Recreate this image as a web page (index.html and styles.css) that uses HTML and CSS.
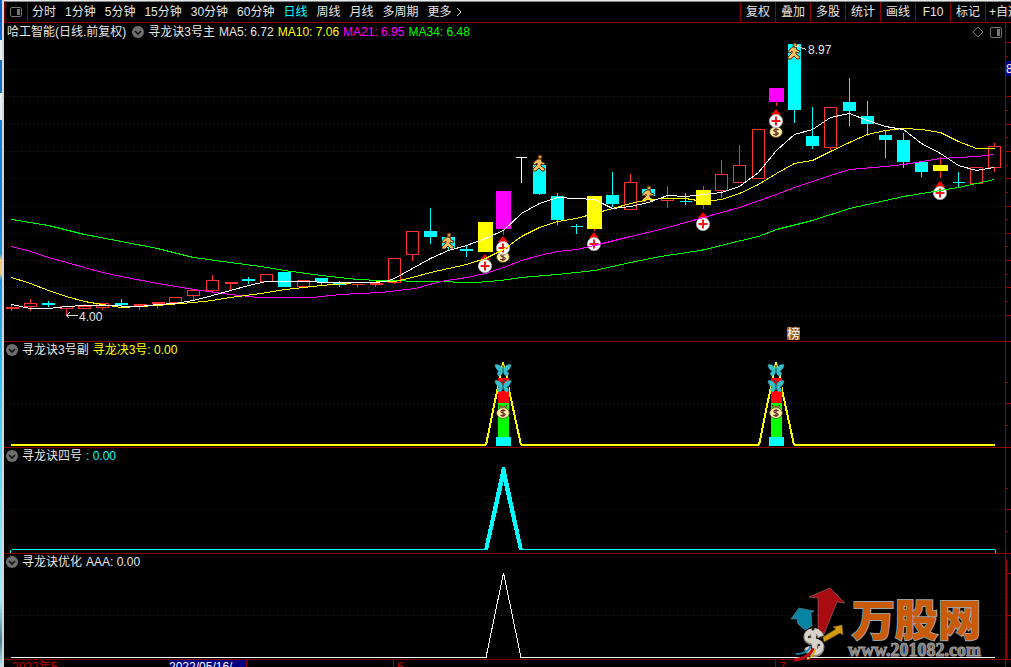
FILE: index.html
```html
<!DOCTYPE html>
<html lang="zh-CN">
<head>
<meta charset="utf-8">
<title>哈工智能 日线</title>
<link rel="stylesheet" href="styles.css">
</head>
<body>
<svg class="defs" aria-hidden="true">
  <defs>
    <symbol id="chev" viewBox="0 0 12 12"><circle cx="6" cy="6" r="6" fill="#6e6e6e"/><path d="M3 5l3 3 3-3" fill="none" stroke="#111" stroke-width="1.6"/></symbol>
    <g id="man">
      <path d="M-1-5L2-5 3-2 6-1 5 1 2 0 2 2 6 5 5 7 3 7 0 4-3 7-6 7-6 5-2 1-2-1-4 1-6 0-4-3z" fill="#f5bd60" stroke="#5a2c0c"/>
      <circle cx="1" cy="-7" r="2" fill="#e09a40" stroke="#5a2c0c"/>
    </g>
    <g id="cross">
      <path d="M-5-6L0-12 5-6z" fill="#f00"/>
      <circle r="6.6" fill="#fff" stroke="#aaa" stroke-width=".8"/>
      <path d="M-4.500 0H4.500M0-4.500V4.500" stroke="#f01818" stroke-width="2"/>
    </g>
    <g id="bag">
      <path d="M-4-8L0-6 4-8 2-4H-2z" fill="#d9a860" stroke="#5a2c10" stroke-width=".8"/>
      <ellipse rx="6.400" ry="5.400" fill="#fff0a0" stroke="#604020" stroke-width=".8"/>
      <path d="M2.500-2C1-3.500-2.500-3-2-1.200S2.500 0 2.200 1.600-1.500 3.200-2.600 2M0-4V4" fill="none" stroke="#6a3030" stroke-width="1.300"/>
    </g>
    <g id="fly">
      <path d="M0 0C-2-5-6-6-8-5-7-1-5 1-3 1-6 2-6 5-4 6-2 6-1 3 0 2 1 3 2 6 4 6 6 5 6 2 3 1 5 1 7-1 8-5 6-6 2-5 0 0z" fill="#35bfc9" stroke="#35bfc9" stroke-width=".7"/>
      <path d="M0-3V4M0-3L-2-6M0-3L2-6" stroke="#104c58" fill="none"/>
    </g>
    <g id="signal">
      <g shape-rendering="crispEdges">
        <path d="M-17 445L0 362 18 445" fill="none" stroke="#ff0" stroke-width="2"/>
        <path d="M-5 374H6V402H-5z" fill="#000"/>
        <path d="M-5 402h11v35h-11z" fill="#0f0"/>
        <path d="M-5 391h11v12h-11zM-5 378h11v7h-11z" fill="red"/>
        <path d="M-7 437h15v9h-15z" fill="#0ff"/>
        <path d="M-4 374h2v4h-2zM3 374h2v4h-2z" fill="#ff0"/>
      </g>
      <use href="#fly" y="386"/>
      <use href="#fly" y="370"/>
      <use href="#bag" y="413"/>
    </g>
  </defs>
</svg>

<div class="desktop-edge" aria-hidden="true"></div>
<main class="app">
  <nav class="toolbar">
    <button class="layout-toggle" aria-label="切换侧栏"><svg width="12" height="12" viewBox="0 0 12 12"><rect x=".5" y="1.500" width="11" height="9" rx="1.500" fill="none" stroke="#777"/><path d="M7 3h3v6H7z" fill="#777"/></svg></button>
    <div class="periods">
      <button>分时</button><button>1分钟</button><button>5分钟</button><button>15分钟</button><button>30分钟</button><button>60分钟</button><button class="active">日线</button><button>周线</button><button>月线</button><button>多周期</button><button class="more">更多<svg width="6" height="10" viewBox="0 0 6 10"><path d="M1 1l4 4-4 4" fill="none" stroke="#ddd"/></svg></button>
    </div>
    <div class="tools">
      <button>复权</button><button>叠加</button><button>多股</button><button>统计</button><button>画线</button><button>F10</button><button>标记</button><button class="favorite">+自选</button>
    </div>
  </nav>

  <div class="workspace">
    <div class="charts">
      <section class="panel price">
        <header class="panel-head">
          <span class="stock">哈工智能(日线.前复权)</span>
          <button class="collapse" aria-label="指标菜单"><svg width="12" height="12"><use href="#chev"/></svg></button>
          <span>寻龙诀3号主</span>
          <span>MA5: 6.72</span><span class="yellow">MA10: 7.06</span><span class="magenta">MA21: 6.95</span><span class="green">MA34: 6.48</span>
          <span class="head-icons"><svg width="30" height="12" viewBox="0 0 30 12"><path d="M6 1l5 5-5 5-5-5z" fill="none" stroke="#777"/><rect x="18.500" y="1.500" width="11" height="10" rx="1.500" fill="none" stroke="#777"/><path d="M25 3h3v7h-3z" fill="#777"/></svg></span>
        </header>
        <svg class="plot" viewBox="4 23 1001 318" preserveAspectRatio="xMinYMin meet" role="img" aria-label="日K线图">
          <path class="grid" d="M5 69.500H1005M5 96.500H1005M5 124.500H1005M5 151.500H1005M5 178.500H1005M5 206.500H1005M5 233.500H1005M5 260.500H1005M5 287.500H1005M5 315.500H1005"/>
          <g transform="translate(.5 .5)" shape-rendering="crispEdges">
            <path class="rise" d="M11 303V310M30 298V310M66 308V315M84 303V306M102 307V309M139 303V309M157 304V308M175 296V297M193 288V299M212 274V292M230 282V290M266 273V274M357 284V286M375 284V286M394 282V283M412 254V260M503 228V234M594 228V230M630 173V182M667 185V198M667 200V207M703 185V208M721 159V174M721 190V197M739 144V165M776 101V105M830 147V149M940 156V177M976 166V167M994 142V146M994 167V171"/>
            <path class="rise box" d="M24 303h12v3h-12zM60 306h12v2h-12zM78 306h12v2h-12zM96 303h12v4h-12zM169 297h12v5h-12zM187 290h12v5h-12zM206 280h12v10h-12zM260 274h12v7h-12zM297 280h12v6h-12zM388 258h12v24h-12zM406 231h12v23h-12zM624 182h12v27h-12zM661 198h12v2h-12zM715 174h12v16h-12zM733 165h12v17h-12zM752 129h12v49h-12zM824 107h12v40h-12zM970 167h12v16h-12zM988 146h12v21h-12z"/>
            <path class="rise" d="M5 307H18M5 308H18M133 304H146M133 305H146M151 302H164M151 303H164M224 282H237M224 283H237M333 283H346M333 284H346M351 284H364M369 283H382M369 284H382"/>
            <path class="fall" d="M48 300V306M121 298V306M248 276V283M321 281V285M339 280V286M430 207V243M448 237V249M466 244V256M539 193V194M557 192V224M576 223V233M570 226H582M612 171V206M685 192V204M679 201H691M794 109V122M812 106V148M849 77V125M867 100V135M885 130V157M903 132V167M921 171V176M958 171V186M952 182H964"/>
            <path d="M515 157H526M521 157V182" stroke="#fff"/>
          </g>
          <g shape-rendering="crispEdges">
            <path fill="#0ff" d="M42 303h13v2h-13zM115 303h13v2h-13zM242 279h13v2h-13zM278 272h13v15h-13zM315 278h13v4h-13zM333 282h13v3h-13zM424 231h13v6h-13zM442 237h13v11h-13zM460 249h13v2h-13zM533 165h13v29h-13zM551 196h13v24h-13zM606 195h13v9h-13zM642 189h13v7h-13zM788 44h13v66h-13zM806 136h13v10h-13zM843 102h13v9h-13zM861 116h13v8h-13zM879 135h13v5h-13zM897 140h13v22h-13zM915 162h13v10h-13z"/>
            <path fill="#ff0" d="M478 222h15v30h-15zM587 196h15v33h-15zM696 190h15v15h-15zM933 165h15v6h-15z"/>
            <path fill="#f0f" d="M496 191h15v38h-15zM769 88h15v14h-15z"/>
          </g>
          <use href="#bag" x="503" y="257"/>
          <use href="#bag" x="776" y="132"/>
          <use href="#cross" x="485" y="266"/><use href="#cross" x="503" y="248"/><use href="#cross" x="594" y="244"/><use href="#cross" x="703" y="224"/><use href="#cross" x="776" y="121"/><use href="#cross" x="940" y="193"/>
          <use href="#man" x="448" y="242"/><use href="#man" x="539" y="164"/><use href="#man" x="648" y="195"/><use href="#man" x="794" y="52"/>
          <g class="averages" transform="translate(.5 .5)" shape-rendering="crispEdges">
            <polyline stroke="#0f0" points="11,219 48,225 84,234 121,241 157,248 193,257 230,262 260,266 284,270 321,275 357,279 380,280 430,281 475,282 500,280 521,277 557,274 594,270 630,262 660,256 700,250 741,240 758,236 776,229 812,220 849,208 903,196 940,190 958,187 976,183 994,179"/>
            <polyline stroke="#f0f" points="11,246 30,251 48,257 66,262 84,267 102,272 121,276 157,283 193,289 230,294 258,297 312,297 340,294 380,292 415,288 440,281 466,277 485,273 503,267 521,260 539,255 557,251 576,249 594,245 630,236 660,229 703,217 739,207 776,194 794,187 830,175 849,169 885,166 903,164 940,158 976,156 994,154"/>
            <polyline stroke="#ff0" points="11,277 30,283 48,290 66,296 84,301 102,304 121,307 139,306 157,305 193,302 212,300 230,297 260,293 285,289 321,285 357,282 394,281 412,277 430,272 448,268 466,264 485,258 503,249 521,236 539,227 557,221 576,218 594,213 612,208 630,203 648,199 667,198 685,198 703,201 721,199 739,193 758,184 776,173 794,163 812,160 830,151 849,142 867,134 885,130 903,128 921,129 940,132 958,141 976,148 994,148"/>
            <polyline stroke="#fff" points="11,304 30,308 48,308 66,306 84,305 102,305 139,306 157,304 175,303 193,300 212,295 230,290 248,285 266,281 303,281 330,282 375,282 385,281 394,278 412,268 430,258 448,250 466,245 485,238 503,230 521,213 539,203 557,197 576,198 594,199 612,208 630,206 648,202 667,195 685,196 703,194 721,192 739,186 758,172 776,150 794,134 812,129 830,117 849,113 867,120 885,126 903,129 921,143 940,153 958,165 976,170 994,167"/>
            <path stroke="#ddd" d="M66 315H77M66 315L69 312M66 315L69 318M795 46L799 45M797 46L806 49"/>
          </g>
          <text x="79" y="321">4.00</text>
          <text x="808" y="54">8.97</text>
          <rect x="787" y="327" width="13" height="13" fill="#8a5a24"/>
          <text x="787" y="338" class="rank">榜</text>
        </svg>
      </section>

      <section class="panel">
        <header class="panel-head">
          <button class="collapse" aria-label="指标菜单"><svg width="12" height="12"><use href="#chev"/></svg></button>
          <span>寻龙诀3号副</span><span class="yellow">寻龙决3号: 0.00</span>
        </header>
        <svg class="plot" viewBox="4 342 1001 105" preserveAspectRatio="xMinYMin meet" role="img" aria-label="寻龙诀3号副图">
          <path class="grid" d="M5 403.500H1005"/>
          <path d="M11 445H486M521 445H759M794 445H995" stroke="#ff0" stroke-width="2" shape-rendering="crispEdges"/>
          <use href="#signal" x="503"/><use href="#signal" x="776"/>
        </svg>
      </section>

      <section class="panel">
        <header class="panel-head">
          <button class="collapse" aria-label="指标菜单"><svg width="12" height="12"><use href="#chev"/></svg></button>
          <span>寻龙诀四号</span><span class="cyan">: 0.00</span>
        </header>
        <svg class="plot" viewBox="4 448 1001 105" preserveAspectRatio="xMinYMin meet" role="img" aria-label="寻龙诀四号图">
          <path class="grid" d="M5 509.500H1005"/>
          <path d="M12 549.500H485M522 549.500H995M10.500 550V553M995.500 550V553" stroke="#0ff" shape-rendering="crispEdges"/>
          <path d="M484 550L502 467H505L523 550H519L503.500 482 488 550z" fill="#0ff" shape-rendering="crispEdges"/>
        </svg>
      </section>

      <section class="panel">
        <header class="panel-head">
          <button class="collapse" aria-label="指标菜单"><svg width="12" height="12"><use href="#chev"/></svg></button>
          <span>寻龙诀优化</span><span>AAA: 0.00</span>
        </header>
        <svg class="plot" viewBox="4 554 1001 105" preserveAspectRatio="xMinYMin meet" role="img" aria-label="寻龙诀优化图">
          <path class="grid" d="M5 615.500H1005"/>
          <path d="M11 657.500H486L503.500 573 521 657.500H995" fill="none" stroke="#fff" shape-rendering="crispEdges"/>
          <path d="M830 588L845 603 837 602 824 634 818 633V598L809 597z" fill="#a80c12" stroke="#8c7470" stroke-width=".6"/>
          <path d="M791 619L799 608 814 611 811 613 812 626 805 630 798 624 797 619z" fill="#0784a2" stroke="#668890" stroke-width=".6"/>
          <path d="M823 637L836 629 833 627 842 625 843 635 840 633 824 642z" fill="#d39a10" stroke="#806020" stroke-width=".6"/>
          <path d="M821 637C818 629 806 631 807 638 808 645 820 639 821 647 821 655 811 656 807 648" fill="none" stroke="#8b857e" stroke-width="7"/>
          <path d="M821 636C818 628 806 630 807 637 808 644 820 638 821 646 821 654 811 655 807 647M813 629L815 653" fill="none" stroke="#d8d3ca" stroke-width="5"/>
          <circle cx="813" cy="629" r="1.500" fill="#222"/><circle cx="809" cy="637" r="1.200" fill="#333"/><circle cx="819" cy="645" r="1.200" fill="#333"/>
          <path d="M796 654Q808 654 811 646" fill="none" stroke="#168aab" stroke-width="2"/>
          <path d="M807 659Q814 657 815 649" fill="none" stroke="#dfa61a" stroke-width="2"/>
          <path d="M794 660Q810 658 813 648" fill="none" stroke="#b60f18" stroke-width="3"/>
          <text x="852" y="636" class="brand">万股网</text>
          <text x="848" y="656" class="site">www.201082.com</text>
        </svg>
      </section>

      <footer class="timeline">
        <span class="month first">2022年5</span>
        <span class="cursor-date">2022/05/16/</span>
        <span class="month june">6</span>
        <span class="month july">7</span>
      </footer>
    </div>

    <aside class="scale" aria-label="价格刻度">
      <svg viewBox="1006 23 5 644" preserveAspectRatio="xMinYMin meet">
        <path d="M1006 42.500h5M1006 56.500h2M1006 96.500h5M1006 110.500h2M1006 124.500h5M1006 137.500h2M1006 151.500h5M1006 165.500h2M1006 178.500h5M1006 192.500h2M1006 206.500h5M1006 219.500h2M1006 233.500h5M1006 246.500h2M1006 260.500h5M1006 274.500h2M1006 287.500h5M1006 301.500h2M1006 315.500h5M1006 341.500h5M1006 382.500h2M1006 403.500h5M1006 425.500h2M1006 447.500h5M1006 488.500h2M1006 509.500h5M1006 531.500h2M1006 553.500h5M1006 573.500h5M1006 594.500h2M1006 615.500h5M1006 637.500h2M1006 659.500h5M1006.500 559V659" stroke="#a00000" shape-rendering="crispEdges"/>
        <path d="M1006 61h5v15h-5z" fill="#000080"/>
        <text x="1006" y="73">8</text>
      </svg>
    </aside>
  </div>
</main>
</body>
</html>
```
FILE: styles.css
```css
* { box-sizing: border-box; }

body {
  margin: 0;
  height: 100vh;
  display: flex;
  overflow: hidden;
  background: #000;
  color: #e6e6e6;
  font: 12px/18px "Liberation Sans", "Noto Sans CJK SC", sans-serif;
}

button {
  margin: 0;
  padding: 0;
  border: 0;
  background: none;
  color: inherit;
  font: inherit;
  white-space: nowrap;
}

.defs { position: absolute; width: 0; height: 0; }

.desktop-edge {
  flex: none;
  width: 4px;
  border-right: 2px solid #d4d8dc;
  background: linear-gradient(#0a62c4 0 5%, #0b6bd0 6%, #e8f0f4 6% 9%, #1670c0 9% 14%, #e4edf2 14% 18%, #1780d0 18% 30%, #1b93dc 38%, #f4c878 39% 41%, #1b93dc 42%, #2cc0f0 55%, #6fdcf4 75%, #a4ecfa 90%, #4a8090 96%, #b8e8f0);
}

.app {
  flex: 1;
  min-width: 0;
  display: flex;
  flex-direction: column;
  border-top: 1px solid #e8e8e8;
}

.toolbar {
  flex: none;
  display: flex;
  height: 22px;
  border-top: 1px solid #808888;
  border-bottom: 1px solid #900000;
  border-left: 1px solid #900000;
}

.layout-toggle {
  width: 23px;
  display: flex;
  align-items: center;
  justify-content: center;
  border-right: 1px solid #900000;
}

.periods {
  flex: 1;
  min-width: 0;
  display: flex;
  gap: 9px;
  padding-left: 4px;
}

.active, .cyan { color: #0ff; }
.more { display: flex; align-items: center; gap: 4px; }

.tools { display: flex; }
.tools button { width: 35px; border-left: 1px solid #900000; }
.tools .favorite {
  width: 26px;
  padding-left: 3px;
  overflow: hidden;
  text-align: left;
}

.workspace { flex: 1; min-height: 0; display: flex; }

.charts {
  flex: 1;
  min-width: 0;
  display: flex;
  flex-direction: column;
}

.panel {
  flex: 105 1 0;
  min-height: 0;
  display: grid;
  grid-template: minmax(0, 1fr) / minmax(0, 1fr);
  border-bottom: 1px solid #800000;
}
.panel.price { flex-grow: 318; }

.panel-head {
  grid-area: 1 / 1;
  z-index: 1;
  align-self: start;
  display: flex;
  align-items: center;
  gap: 4px;
  padding: 0 3px 0 2px;
  line-height: 16px;
  white-space: nowrap;
}
.price .panel-head { padding: 0 3px; line-height: 18px; }

.collapse { display: flex; }
.stock { margin-right: 2px; }
.head-icons { display: flex; margin-left: auto; }

.yellow { color: #ff0; }
.magenta { color: #f0f; }
.green { color: #0f0; }

.plot {
  grid-area: 1 / 1;
  display: block;
  width: 100%;
  height: 100%;
  overflow: visible;
  fill: #e6e6e6;
}

.grid { stroke: #800000; stroke-dasharray: 1 3; fill: none; }
.rise { stroke: #ff3232; fill: none; }
.rise.box { fill: #000; }
.fall { stroke: #0ff; fill: none; }
.averages { fill: none; }

.rank { font-size: 13px; fill: #fff; }

.brand {
  font: 900 43px "Noto Sans CJK SC", sans-serif;
  fill: #c85a08;
  stroke: #a0a0a0;
  stroke-width: 2px;
  paint-order: stroke;
}
.site {
  font: bold 18px "Liberation Serif", serif;
  fill: #777;
  stroke: #999;
  stroke-width: 1px;
}

.timeline {
  flex: none;
  height: 7px;
  display: grid;
  grid-template-columns: 165fr 224fr 382fr 230fr;
  overflow: hidden;
  line-height: 14px;
}
.month { color: #c00000; border-left: 1px solid #900000; padding-left: 3px; }
.month.first { border: 0; padding-left: 8px; }
.cursor-date {
  justify-self: start;
  width: 78px;
  background: #000080;
  color: #fff;
  border-right: 1px solid #900000;
}
.june { grid-column: 3; }

.scale {
  flex: none;
  width: 6px;
  border-left: 1px solid #900000;
}
.scale svg { display: block; width: 100%; height: 100%; overflow: hidden; fill: #fff; }
```
